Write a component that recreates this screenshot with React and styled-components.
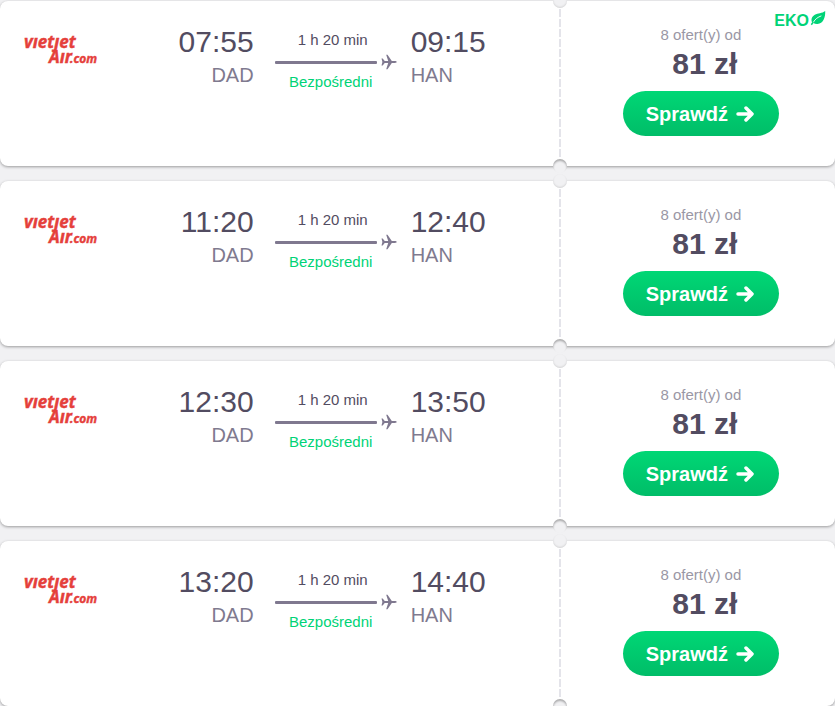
import React from "react";
import styled, { createGlobalStyle } from "styled-components";

const GlobalStyle = createGlobalStyle`
  *, *::before, *::after { box-sizing: border-box; }
  body {
    margin: 0;
    background: #f1f1f3;
    color: #524c61;
    font-family: "Liberation Sans", Arial, sans-serif;
  }
`;

const Results = styled.main`
  display: flex;
  flex-direction: column;
  gap: 15px;
  padding: 1px 0 0;
`;

const Card = styled.article`
  position: relative;
  display: grid;
  grid-template-columns: minmax(0, 2fr) minmax(0, 1fr);
  min-height: 165px;
  border-radius: 8px;
  background: #fff;
  box-shadow: 0 1px 3px rgba(0, 0, 0, 0.36);
`;

const Journey = styled.section`
  display: grid;
  grid-template-columns: 74px minmax(0, 1fr) 122px 90px;
  align-items: start;
  padding: 26px 70px 24px 24px;
`;

const Logo = styled.svg`
  display: block;
  width: 76px;
  height: 36px;
  margin-top: 5px;
  overflow: visible;
  fill: #e5403b;
  stroke: #e5403b;
  stroke-width: 0.4;
  font-family: "Noto Sans", "Open Sans", sans-serif;
  font-style: italic;
  font-weight: 700;
`;

const Stop = styled.div`
  text-align: ${(p) => p.$align};
  padding-right: ${(p) => (p.$align === "right" ? "21px" : "0")};
  padding-left: ${(p) => (p.$align === "left" ? "14px" : "0")};
  white-space: nowrap;
`;

const Time = styled.div`
  font-size: 30px;
  line-height: 30px;
`;

const Airport = styled.div`
  margin-top: 6px;
  color: #7f7a8f;
  font-size: 20px;
  line-height: 24px;
`;

const Route = styled.div`
  margin-top: 3px;
  font-size: 15px;
  line-height: 20px;
`;

const RouteLabel = styled.div`
  padding-right: ${(p) => (p.$direct ? "10px" : "6px")};
  color: ${(p) => (p.$direct ? "#00d377" : "inherit")};
  text-align: center;
`;

const Track = styled.div`
  display: flex;
  align-items: center;
  gap: 4px;
  height: 22px;
  padding-top: 2px;

  &::before {
    content: "";
    flex: 1;
    height: 3px;
    border-radius: 1px;
    background: #7f788f;
  }

  svg {
    display: block;
    fill: #7f788f;
  }
`;

const Offer = styled.section`
  position: relative;
  display: flex;
  flex-direction: column;
  align-items: center;
  padding: 24px 0 24px 10px;

  &::before {
    content: "";
    position: absolute;
    top: 8px;
    bottom: 8px;
    left: 2px;
    width: 2px;
    background: repeating-linear-gradient(#e4e4ea 0 8px, transparent 8px 10px);
  }
`;

const Notch = styled.span`
  position: absolute;
  left: -4px;
  width: 14px;
  height: 14px;
  border-radius: 50%;
  background: #f1f1f3;
  ${(p) =>
    p.$edge === "top"
      ? "top: -7px; box-shadow: inset 0 -1px 2px rgba(0, 0, 0, 0.12);"
      : "bottom: -7px; box-shadow: inset 0 2px 2px rgba(0, 0, 0, 0.28);"}
`;

const OfferCount = styled.div`
  color: #9a97a5;
  font-size: 15px;
  line-height: 20px;
`;

const Price = styled.div`
  margin: 1px 0 9px;
  padding-left: 8px;
  font-size: 30px;
  font-weight: 700;
  line-height: 36px;
`;

const CheckButton = styled.button`
  display: flex;
  align-items: center;
  justify-content: center;
  gap: 8px;
  width: 156px;
  height: 45px;
  padding: 0 2px 0 0;
  border: 0;
  border-radius: 23px;
  background: linear-gradient(#00d775, #00bd68);
  color: #fff;
  font: 700 20px/24px "Liberation Sans", Arial, sans-serif;
  cursor: pointer;
`;

const EcoBadge = styled.div`
  position: absolute;
  top: 9px;
  right: 9px;
  display: flex;
  align-items: flex-start;
  gap: 1px;
  color: #00d377;
  font-size: 16px;
  font-weight: 700;
  line-height: 22px;
`;

function VietjetLogo() {
  return (
    <Logo viewBox="0 0 76 36" role="img" aria-label="Vietjet Air.com">
      <text>
        <tspan x="0" y="16" fontSize="17">vıetȷet</tspan>
        <tspan x="25" y="31" fontSize="17">Aır</tspan>
        <tspan x="46" y="31" fontSize="12">.com</tspan>
      </text>
    </Logo>
  );
}

function Plane() {
  return (
    <svg width="16" height="16" viewBox="0 0 16 16" aria-hidden="true">
      <path d="M.5 4.500h1.200l2 2.600h3.500L5.200.8h1.300l4.300 6.300h3c1.100 0 1.900.400 1.900.900s-.8.900-1.900.900h-3l-4.300 6.300H5.200l2-6.300H3.700l-2 2.600H.5L1.400 8z" />
    </svg>
  );
}

function Leaf() {
  return (
    <svg width="16" height="16" viewBox="0 0 15 16" aria-hidden="true">
      <path fill="currentColor" d="M14.700 1C15 7.500 12.700 13.500 7 14c-1.700.1-3-.3-4-1.100L1.400 15.200.3 14.300l1.300-2.100C.2 9.200 1.500 6.200 4.300 4.700 7.500 3 11.500 3.600 14.700 1z" />
      <path fill="none" stroke="#fff" strokeWidth=".9" strokeLinecap="round" d="M3 12C4.700 8.900 7.300 7.200 10.500 6" />
    </svg>
  );
}

function Arrow() {
  return (
    <svg width="18" height="18" viewBox="0 0 18 18" fill="none" stroke="currentColor"
      strokeWidth="3.5" strokeLinecap="round" strokeLinejoin="round" aria-hidden="true">
      <path d="M2 9h13M10 3l6 6-6 6" />
    </svg>
  );
}

const flights = [
  { departure: "07:55", arrival: "09:15", eco: true },
  { departure: "11:20", arrival: "12:40" },
  { departure: "12:30", arrival: "13:50" },
  { departure: "13:20", arrival: "14:40" },
];

function FlightCard({ flight }) {
  return (
    <Card>
      <Journey>
        <VietjetLogo />
        <Stop $align="right">
          <Time>{flight.departure}</Time>
          <Airport>DAD</Airport>
        </Stop>
        <Route>
          <RouteLabel>1 h 20 min</RouteLabel>
          <Track><Plane /></Track>
          <RouteLabel $direct>Bezpośredni</RouteLabel>
        </Route>
        <Stop $align="left">
          <Time>{flight.arrival}</Time>
          <Airport>HAN</Airport>
        </Stop>
      </Journey>
      <Offer>
        <Notch $edge="top" />
        <Notch $edge="bottom" />
        {flight.eco && <EcoBadge>EKO<Leaf /></EcoBadge>}
        <OfferCount>8 ofert(y) od</OfferCount>
        <Price>81 zł</Price>
        <CheckButton type="button">Sprawdź <Arrow /></CheckButton>
      </Offer>
    </Card>
  );
}

export default function App() {
  return (
    <>
      <GlobalStyle />
      <Results>
        {flights.map((flight) => (
          <FlightCard key={flight.departure} flight={flight} />
        ))}
      </Results>
    </>
  );
}
